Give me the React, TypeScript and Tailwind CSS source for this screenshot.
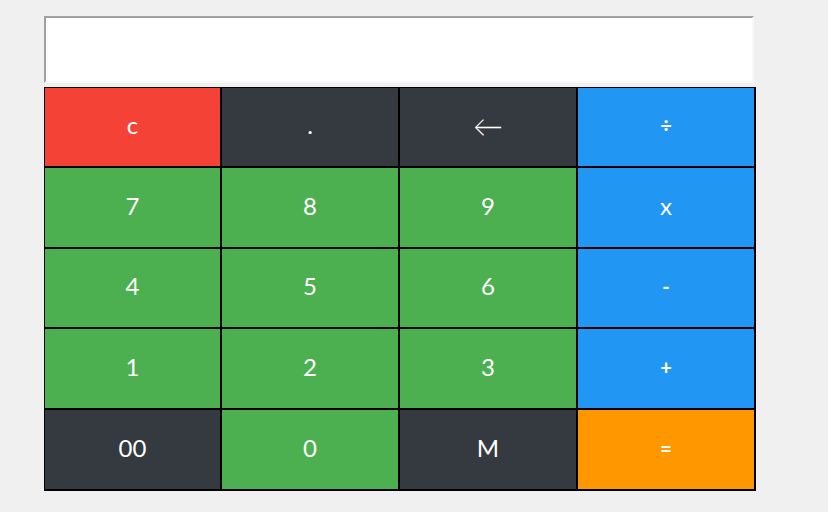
import React from 'react';

type Key = { label: string; color: string; size: string };

const num = 'text-[24px] font-normal';
const op = 'text-[20px] font-bold';

const rows: { h: string; keys: Key[] }[] = [
  {
    h: 'h-[80px]',
    keys: [
      { label: 'c', color: 'bg-[#f44336]', size: num },
      { label: '.', color: 'bg-[#343a40]', size: num },
      { label: '←', color: 'bg-[#343a40]', size: 'text-[30px] font-light' },
      { label: '÷', color: 'bg-[#2196f3]', size: op },
    ],
  },
  {
    h: 'h-[81px]',
    keys: [
      { label: '7', color: 'bg-[#4caf50]', size: num },
      { label: '8', color: 'bg-[#4caf50]', size: num },
      { label: '9', color: 'bg-[#4caf50]', size: num },
      { label: 'x', color: 'bg-[#2196f3]', size: num },
    ],
  },
  {
    h: 'h-[80px]',
    keys: [
      { label: '4', color: 'bg-[#4caf50]', size: num },
      { label: '5', color: 'bg-[#4caf50]', size: num },
      { label: '6', color: 'bg-[#4caf50]', size: num },
      { label: '-', color: 'bg-[#2196f3]', size: op },
    ],
  },
  {
    h: 'h-[81px]',
    keys: [
      { label: '1', color: 'bg-[#4caf50]', size: num },
      { label: '2', color: 'bg-[#4caf50]', size: num },
      { label: '3', color: 'bg-[#4caf50]', size: num },
      { label: '+', color: 'bg-[#2196f3]', size: op },
    ],
  },
  {
    h: 'h-[81px]',
    keys: [
      { label: '00', color: 'bg-[#343a40]', size: num },
      { label: '0', color: 'bg-[#4caf50]', size: num },
      { label: 'M', color: 'bg-[#343a40]', size: num },
      { label: '=', color: 'bg-[#ff9800]', size: op },
    ],
  },
];

const App: React.FC = () => {
  return (
    <div className="min-h-screen bg-[#f0f0f0] pt-[16px] pl-[44px] font-['Lato','Liberation_Sans',sans-serif]">
      <div className="w-[712px]">
        <input
          readOnly
          className="block w-[710px] h-[67px] bg-white outline-none border-2 border-t-[#a0a0a0] border-l-[#a0a0a0] border-b-[#f8f8f8] border-r-[#f8f8f8]"
        />
        <div className="mt-[4px] grid grid-cols-[177px_178px_178px_178px] border-t border-l border-black w-fit">
          {rows.map((row) =>
            row.keys.map((k) => (
              <button
                key={k.label}
                className={`${k.color} ${k.size} ${row.h} border-r-2 border-b-2 border-black text-white flex items-center justify-center pb-[4px]`}
              >
                {k.label}
              </button>
            ))
          )}
        </div>
      </div>
    </div>
  );
};

export default App;
